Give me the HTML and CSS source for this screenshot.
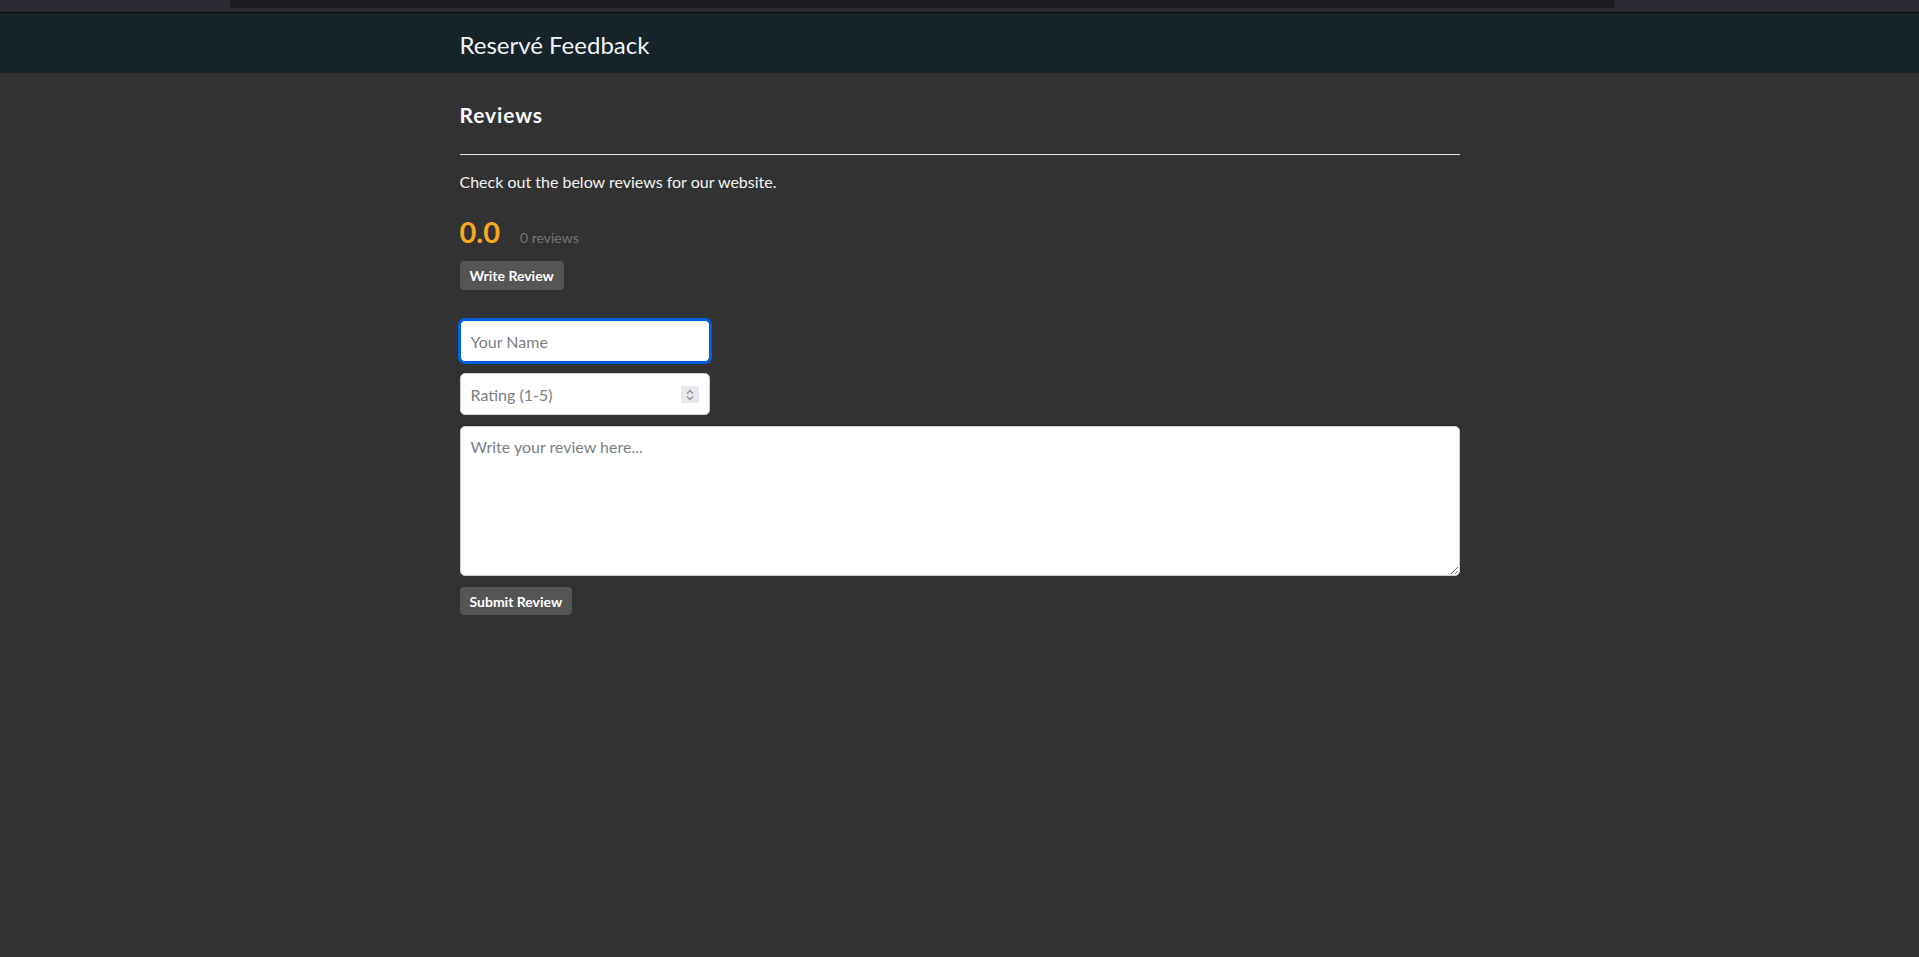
FILE: index.html
```html
<!DOCTYPE html>
<html lang="en">
<head>
<meta charset="utf-8">
<title>Reservé Feedback</title>
<link rel="stylesheet" href="styles.css">
</head>
<body>
<div class="browserbar">
  <div class="urlbar"></div>
</div>
<header class="site-header">
  <div class="container">
    <h1 class="site-title">Reservé Feedback</h1>
  </div>
</header>
<main class="container main">
  <h2 class="section-title">Reviews</h2>
  <hr class="divider">
  <p class="intro">Check out the below reviews for our website.</p>
  <div class="rating-row">
    <span class="avg">0.0</span>
    <span class="count">0 reviews</span>
  </div>
  <button class="btn" type="button">Write Review</button>
  <form class="review-form">
    <input class="field field-name is-focused" type="text" placeholder="Your Name" autofocus>
    <div class="number-wrap">
      <input class="field field-rating" type="number" min="1" max="5" placeholder="Rating (1-5)">
      <span class="spinner">
        <svg width="10" height="14" viewBox="0 0 10 14"><path d="M2 5.5 L5 2.5 L8 5.5" fill="none" stroke="#8f8f9d" stroke-width="1.3"/><path d="M2 8.5 L5 11.5 L8 8.5" fill="none" stroke="#8f8f9d" stroke-width="1.3"/></svg>
      </span>
    </div>
    <textarea class="field field-text" placeholder="Write your review here..."></textarea>
    <button class="btn btn-submit" type="button">Submit Review</button>
  </form>
</main>
</body>
</html>
```

FILE: styles.css
```css
html, body {
  margin: 0;
  padding: 0;
}
body {
  background: #323232;
  color: #f2f2f2;
  font-family: Lato, "Noto Sans", sans-serif;
  min-height: 957px;
}
.browserbar {
  height: 12px;
  background: #2b2a33;
  border-bottom: 1px solid #0c0c0d;
  display: flex;
}
.urlbar {
  margin-left: 230px;
  width: 1385px;
  height: 8px;
  background: #1c1b22;
  border-radius: 0 0 4px 4px;
}
.container {
  width: 1000px;
  margin: 0 auto;
}
.site-header {
  background: #162329;
  height: 60px;
  box-sizing: border-box;
  padding-top: 17px;
}
.site-title {
  margin: 0;
  font-size: 24px;
  font-weight: 400;
  line-height: 30px;
  color: #eef3f6;
}
.main {
  padding-top: 30px;
}
.section-title {
  margin: 0;
  font-size: 21px;
  letter-spacing: 0.9px;
  line-height: 24px;
  font-weight: 700;
  color: #fafafa;
}
.divider {
  margin: 27px 0 15px;
  border: 0;
  border-top: 1px solid #e6e6e6;
  height: 0;
}
.intro {
  margin: 0;
  font-size: 16px;
  line-height: 24px;
}
.rating-row {
  margin-top: 20px;
  display: flex;
  align-items: baseline;
  gap: 20px;
  height: 36px;
}
.avg {
  font-size: 29px;
  font-weight: 700;
  color: #f5a623;
  line-height: 36px;
}
.count {
  font-size: 14px;
  color: #777;
}
.btn {
  margin-top: 11px;
  height: 29px;
  padding: 0 10px;
  border: 0;
  border-radius: 4px;
  background: #555;
  color: #fff;
  font-family: inherit;
  font-size: 14px;
  font-weight: 700;
  display: block;
}
.review-form {
  margin-top: 30px;
  display: flex;
  flex-direction: column;
  align-items: flex-start;
}
.field {
  box-sizing: border-box;
  border: 1px solid #ccc;
  border-radius: 5px;
  background: #fff;
  font-family: inherit;
  font-size: 16px;
  color: #222;
  padding: 0 10px;
  outline: none;
}
.field::placeholder {
  color: #7b7f86;
}
.field-name,
.field-rating {
  width: 250px;
  height: 42px;
}
.is-focused {
  border-color: #0060df;
  box-shadow: 0 0 0 2px #0060df;
}
.number-wrap {
  position: relative;
  margin-top: 11px;
}
.field-rating::-webkit-inner-spin-button,
.field-rating::-webkit-outer-spin-button {
  -webkit-appearance: none;
  margin: 0;
}
.field-rating {
  -moz-appearance: textfield;
  display: block;
}
.spinner {
  position: absolute;
  right: 11px;
  top: 13px;
  width: 18px;
  height: 17px;
  background: #e9e9ed;
  display: flex;
  align-items: center;
  justify-content: center;
}
.field-text {
  margin-top: 11px;
  width: 1000px;
  height: 150px;
  padding: 10px;
  resize: vertical;
  line-height: 20px;
}
.btn-submit {
  margin-top: 11px;
  height: 28px;
}
```
